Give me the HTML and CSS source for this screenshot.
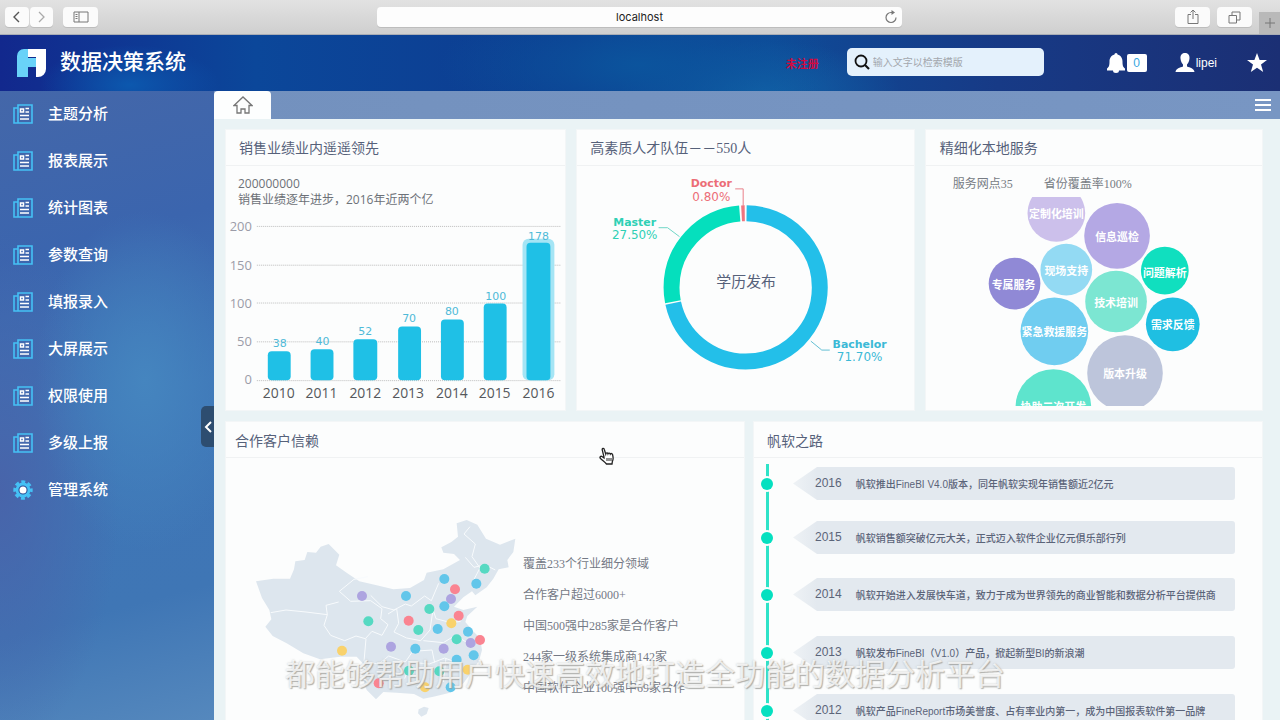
FILE: index.html
```html
<!DOCTYPE html>
<html lang="zh-CN">
<head>
<meta charset="utf-8">
<title>数据决策系统</title>
<link rel="stylesheet" href="styles.css">
</head>
<body>
<svg class="defs" aria-hidden="true">
  <symbol id="report" viewBox="0 0 20 20">
    <path d="M5 4H1v15h4M5 1h14v18H5z" fill="none" stroke="#45c1f5" stroke-width="1.600"/>
    <path d="M7.500 5h3v3h-3zM12.500 4.500H16M12.500 8H16M7 11.500h9M7 15h9" fill="none" stroke="#fff" stroke-width="1.500"/>
  </symbol>
</svg>
<div class="browser">
  <div class="pair">
    <button class="bbtn" aria-label="后退"><svg width="10" height="12" viewBox="0 0 10 12"><path d="M7 1L2 6l5 5" fill="none" stroke="#555" stroke-width="1.400"/></svg></button>
    <button class="bbtn" aria-label="前进"><svg width="10" height="12" viewBox="0 0 10 12"><path d="M3 1l5 5-5 5" fill="none" stroke="#aaa" stroke-width="1.300"/></svg></button>
  </div>
  <button class="bbtn wide" aria-label="边栏"><svg width="16" height="12" viewBox="0 0 16 12"><path d="M1 1h14v10H1zM6 1v10M2.500 3.500h2M2.500 5.500h2M2.500 7.500h2" fill="none" stroke="#777"/></svg></button>
  <div class="address">
    <input class="url" aria-label="地址" value="localhost">
    <button class="reload" aria-label="重新加载"><svg width="14" height="14" viewBox="0 0 14 14"><path d="M12 7.500A5 5 0 1 1 7 2.500h2" fill="none" stroke="#777" stroke-width="1.200"/><path d="M7.500 0l3.500 2.500-3.500 2.500z" fill="#777"/></svg></button>
  </div>
  <div class="bright">
    <button class="bbtn wide" aria-label="共享"><svg width="12" height="16" viewBox="0 0 12 16"><path d="M4 5.500H1v9h10v-9H8M6 10V1M3.500 3.500L6 1l2.500 2.500" fill="none" stroke="#777"/></svg></button>
    <button class="bbtn wide" aria-label="标签页"><svg width="13" height="13" viewBox="0 0 13 13"><path d="M1 4.500h7.500v7.500H1zM4 4V1h8v8H9" fill="none" stroke="#777"/></svg></button>
    <button class="newtab" aria-label="新标签页"><svg width="12" height="12" viewBox="0 0 12 12"><path d="M6 1v10M1 6h10" stroke="#777"/></svg></button>
  </div>
</div>
<header class="header">
  <svg class="logo" width="30" height="30" viewBox="0 0 30 30"><path d="M7 1h4v9h8v9h-8v10H0V8a7 7 0 0 1 7-7z" fill="#69d2f8"/><path d="M11 1h18v20a8 8 0 0 1-8 8h-2V9h-8z" fill="#fff"/></svg>
  <h1 class="brand">数据决策系统</h1>
  <div class="tools">
    <span class="unreg">未注册</span>
    <label class="search"><svg width="16" height="16" viewBox="0 0 16 16"><circle cx="7" cy="7" r="5.500" fill="none" stroke="#111" stroke-width="1.800"/><path d="M11 11l4 4" stroke="#111" stroke-width="2.200"/></svg><input class="query" aria-label="检索模版" placeholder="输入文字以检索模版"></label>
    <button class="tool bell" aria-label="消息"><svg width="20" height="22" viewBox="0 0 20 22"><path d="M10 1c1 0 1.500.8 1.500 1.600C15 3.500 16.500 6.500 16.500 9.500c0 4 .5 5.500 2.500 7v2H1v-2c2-1.500 2.500-3 2.500-7 0-3 1.500-6 5-6.900C8.500 1.800 9 1 10 1zM7 18.500h6a3 2.500 0 0 1-6 0z" fill="#fff"/></svg><span class="badge">0</span></button>
    <button class="tool user"><svg width="20" height="20" viewBox="0 0 20 20"><path d="M10 0c3.500 0 4.800 2.500 4.500 5.500-.2 3-1.500 5-2.500 6v2c3 1 7 2 7.500 5.500H.5C1 15.500 5 14.500 8 13.500v-2c-1-1-2.300-3-2.500-6C5.200 2.500 6.500 0 10 0z" fill="#fff"/></svg>lipei</button>
    <button class="tool" aria-label="收藏"><svg width="20" height="20" viewBox="0 0 20 20"><path d="M10 0l2.600 7H20l-6 4.500 2.200 7.500L10 14.700 3.800 19 6 11.500 0 7h7.400z" fill="#fff"/></svg></button>
  </div>
</header>
<div class="main">
  <aside class="sidebar">
    <nav class="nav">
      <a class="item" href="#"><svg class="ico"><use href="#report"/></svg>主题分析</a>
      <a class="item" href="#"><svg class="ico"><use href="#report"/></svg>报表展示</a>
      <a class="item" href="#"><svg class="ico"><use href="#report"/></svg>统计图表</a>
      <a class="item" href="#"><svg class="ico"><use href="#report"/></svg>参数查询</a>
      <a class="item" href="#"><svg class="ico"><use href="#report"/></svg>填报录入</a>
      <a class="item" href="#"><svg class="ico"><use href="#report"/></svg>大屏展示</a>
      <a class="item" href="#"><svg class="ico"><use href="#report"/></svg>权限使用</a>
      <a class="item" href="#"><svg class="ico"><use href="#report"/></svg>多级上报</a>
      <a class="item" href="#"><svg class="ico" viewBox="0 0 20 20"><circle cx="10" cy="10" r="8" fill="none" stroke="#45c1f5" stroke-width="3.400" stroke-dasharray="3.800 2.483" stroke-dashoffset="1.900"/><circle cx="10" cy="10" r="6" fill="#2b4f94" stroke="#45c1f5" stroke-width="2.800"/><circle cx="10" cy="10" r="3.500" fill="#fff"/></svg>管理系统</a>
    </nav>
    <button class="fold" aria-label="收起"><svg width="8" height="12" viewBox="0 0 8 12"><path d="M7 1L2 6l5 5" fill="none" stroke="#fff" stroke-width="2"/></svg></button>
  </aside>
  <div class="content">
    <div class="tabs">
      <button class="tab" aria-label="首页"><svg width="20" height="18" viewBox="0 0 20 18"><path d="M1 9.500L10 1l9 8.500h-3V17h-4v-4H8v4H4V9.500z" fill="none" stroke="#777" stroke-width="1.300"/></svg></button>
      <button class="menu" aria-label="菜单"><svg width="16" height="14" viewBox="0 0 16 14"><path d="M0 2h16M0 7h16M0 12h16" stroke="#fff" stroke-width="2"/></svg></button>
    </div>
    <main class="board">
      <div class="row top">
        <section class="card">
          <h2 class="title">销售业绩业内遥遥领先</h2>
          <p class="note">200000000<br>销售业绩逐年进步，2016年近两个亿</p>
          <svg class="chart" viewBox="225 208 341 198" role="img" aria-label="年度销售额">
            <path d="M256 226.500h306M256 265.500h306M256 303.500h306M256 342.500h306M256 381.500h306" stroke="#bbb" stroke-dasharray="1 1"/>
            <rect x="523" y="239" width="32" height="142" rx="6" fill="#a5e5f5"/>
            <g class="bars"><rect x="267" y="352" width="23" height="29" rx="4"/><rect x="310" y="350" width="23" height="31" rx="4"/><rect x="353" y="340" width="24" height="41" rx="4"/><rect x="398" y="327" width="23" height="54" rx="4"/><rect x="441" y="320" width="23" height="61" rx="4"/><rect x="484" y="304" width="23" height="77" rx="4"/><rect x="527" y="243" width="24" height="138" rx="4"/></g>
            <g class="axis"><text x="251" y="231">200</text><text x="251" y="270">150</text><text x="251" y="308">100</text><text x="251" y="347">50</text><text x="251" y="385">0</text></g>
            <g class="vals"><text x="279" y="348">38</text><text x="322" y="346">40</text><text x="365" y="336">52</text><text x="409" y="323">70</text><text x="452" y="316">80</text><text x="496" y="300">100</text><text x="539" y="240">178</text></g>
            <g class="years"><text x="278" y="399">2010</text><text x="321" y="399">2011</text><text x="365" y="399">2012</text><text x="408" y="399">2013</text><text x="452" y="399">2014</text><text x="495" y="399">2015</text><text x="539" y="399">2016</text></g>
          </svg>
        </section>
        <section class="card">
          <h2 class="title">高素质人才队伍－－550人</h2>
          <svg class="chart" viewBox="576 166 338 240" role="img" aria-label="学历分布">
            <g fill="none" stroke-width="16" transform="rotate(-90 745.500 288)">
              <circle cx="745.500" cy="288" r="74.500" pathLength="1000" stroke="#23bfe9" stroke-dasharray="714 286" stroke-dashoffset="-2"/>
              <circle cx="745.500" cy="288" r="74.500" pathLength="1000" stroke="#05dfbd" stroke-dasharray="268 732" stroke-dashoffset="-719"/>
              <circle cx="745.500" cy="288" r="74.500" pathLength="1000" stroke="#f0757f" stroke-dasharray="7 993" stroke-dashoffset="-991"/>
            </g>
            <path d="M735 189h8v17" fill="none" stroke="#e9808a"/><path d="M658 228h9l12 9" fill="none" stroke="#6fd6c6"/><path d="M811 342l11 9h8" fill="none" stroke="#63bfd4"/>
            <g class="pie"><g fill="#ec6d77"><text class="name" x="711" y="187">Doctor</text><text x="711" y="201">0.80%</text></g><g fill="#2fd0b5"><text class="name" x="634" y="226">Master</text><text x="634" y="239">27.50%</text></g><g fill="#3bb9d6"><text class="name" x="860" y="349">Bachelor</text><text x="860" y="362">71.70%</text></g></g>
            <text class="center" x="746" y="288">学历发布</text>
          </svg>
        </section>
        <section class="card">
          <h2 class="title wide">精细化本地服务</h2>
          <p class="facts"><span>服务网点35</span><span>省份覆盖率100%</span></p>
          <svg class="chart bubbles" viewBox="925 197 338 210" role="img" aria-label="服务内容">
            <circle cx="1056" cy="213" r="29" fill="#ccc0eb"/><circle cx="1117" cy="236" r="33" fill="#b4a8e4"/><circle cx="1066" cy="270" r="26" fill="#93daf3"/><circle cx="1165" cy="271" r="24" fill="#10dfbf"/><circle cx="1014" cy="284" r="26" fill="#9089d6"/><circle cx="1116" cy="302" r="31" fill="#7ce6d2"/><circle cx="1173" cy="325" r="27" fill="#1fbfe2"/><circle cx="1054" cy="332" r="34" fill="#70cdf0"/><circle cx="1125" cy="374" r="38" fill="#bdc5db"/><circle cx="1053" cy="408" r="38" fill="#5ee4cd"/>
            <text x="1056" y="218">定制化培训</text><text x="1117" y="241">信息巡检</text><text x="1066" y="275">现场支持</text><text x="1165" y="277">问题解析</text><text x="1013" y="289">专属服务</text><text x="1116" y="308">技术培训</text><text x="1173" y="330">需求反馈</text><text x="1054" y="337">紧急救援服务</text><text x="1125" y="379">版本升级</text><text x="1053" y="412">协助二次开发</text>
          </svg>
        </section>
      </div>
      <div class="row bottom">
        <section class="card">
          <h2 class="title alt">合作客户信赖</h2>
          <div class="clients">
            <svg class="map" viewBox="0 0 900 630" role="img" aria-label="客户分布地图">
              <path d="M78 214L130 206 180 206 192 178 196 154 224 150 232 126 258 128 272 110 296 102 328 134 318 166 352 190 388 214 440 226 490 238 540 234 582 210 590 188 640 178 690 150 672 132 640 128 634 112 664 96 684 80 680 40 710 30 742 44 768 86 810 104 856 86 850 126 832 150 836 172 806 178 790 206 770 232 736 256 726 244 700 262 672 290 700 300 742 290 712 318 706 336 728 362 750 384 756 420 748 450 728 482 700 520 660 548 610 560 580 566 552 552 500 548 460 546 438 568 410 540 400 510 408 470 380 440 330 440 270 448 220 430 170 400 128 378 106 350 124 328 118 300 96 264zM566 598l16-8 14 4-6 18-16 8-10-10z" fill="#dde6ee"/>
              <g fill="none" stroke="#f8fbfd" stroke-width="3" stroke-linejoin="round"><path d="M122 308l46-8 60 6 64 8-10 32 20 30 42 16 34-14 28 8 20-22 30 12 18-32-22-18 4-30-34-24-60 2-34-30 44-36 42-8"/><path d="M422 256l34 34 36 10 34-18 18 6 40-30 20 14 22-52"/><path d="M292 314l-4-28 38-10M474 312l26-16 6 44-14 26 38 18 42 8 28-32 8-54M408 386l-6 68 44 8 30-24 50 18 22-32 58-4 8 38M606 290l12 36 44 12 30-4M580 392l60 6 36-22 42 26M536 456l62 6 46-18 48 18M648 444l-8 72M540 462l-16 44M706 142l26 30 32-8 32 16M720 50l-18 22 34 30-10 38 24 34-18 34"/></g>
              <g fill="#ada4e0"><circle cx="396" cy="258" r="15"/><circle cx="663" cy="267" r="15"/><circle cx="483" cy="410" r="15"/><circle cx="641" cy="416" r="15"/><circle cx="722" cy="399" r="15"/></g>
              <g fill="#62c6ea"><circle cx="528" cy="258" r="15"/><circle cx="643" cy="207" r="15"/><circle cx="739" cy="221" r="15"/><circle cx="643" cy="289" r="15"/><circle cx="623" cy="357" r="15"/><circle cx="714" cy="365" r="15"/><circle cx="556" cy="416" r="15"/><circle cx="731" cy="436" r="15"/><circle cx="680" cy="449" r="15"/><circle cx="662" cy="532" r="15"/></g>
              <g fill="#56d9c2"><circle cx="764" cy="176" r="15"/><circle cx="598" cy="297" r="15"/><circle cx="415" cy="334" r="15"/><circle cx="565" cy="360" r="15"/><circle cx="680" cy="388" r="15"/><circle cx="537" cy="482" r="15"/><circle cx="628" cy="484" r="15"/></g>
              <g fill="#fa8491"><circle cx="675" cy="238" r="15"/><circle cx="536" cy="332" r="15"/><circle cx="686" cy="317" r="15"/><circle cx="750" cy="390" r="15"/><circle cx="446" cy="520" r="15"/></g>
              <g fill="#f9d26c"><circle cx="664" cy="340" r="15"/><circle cx="336" cy="422" r="15"/><circle cx="713" cy="479" r="15"/><circle cx="585" cy="532" r="15"/></g>
            </svg>
            <ul class="stats"><li>覆盖233个行业细分领域</li><li>合作客户超过6000+</li><li>中国500强中285家是合作客户</li><li>244家一级系统集成商142家</li><li>中国软件企业100强中69家合作</li></ul>
          </div>
        </section>
        <section class="card">
          <h2 class="title">帆软之路</h2>
          <ol class="timeline">
            <li class="event"><div class="tag"><span class="year">2016</span><span>帆软推出FineBI V4.0版本，同年帆软实现年销售额近2亿元</span></div></li>
            <li class="event"><div class="tag"><span class="year">2015</span><span>帆软销售额突破亿元大关，正式迈入软件企业亿元俱乐部行列</span></div></li>
            <li class="event"><div class="tag"><span class="year">2014</span><span>帆软开始进入发展快车道，致力于成为世界领先的商业智能和数据分析平台提供商</span></div></li>
            <li class="event"><div class="tag"><span class="year">2013</span><span>帆软发布FineBI（V1.0）产品，掀起新型BI的新浪潮</span></div></li>
            <li class="event"><div class="tag"><span class="year">2012</span><span>帆软产品FineReport市场美誉度、占有率业内第一，成为中国报表软件第一品牌</span></div></li>
          </ol>
        </section>
      </div>
    </main>
  </div>
</div>
<svg class="cursor" width="16" height="18" viewBox="0 0 16 18"><path d="M5 10L3.300 3.200c-.5-2 1.500-2.500 2-.7L6.700 7c.3-1.400 2-1.400 2.300-.2.500-1.200 2-.9 2.300.3.700-1 2-.6 2.300.7.900 3.200.9 4.700-.3 7L13 17H7.500C6 15 3.500 13.500 1.500 11.500c-1.300-1.500.3-2.700 1.500-2L5 11z" fill="#fff" stroke="#222" stroke-width="1.300"/><path d="M8 11v3M10 11v3M12 11v3" stroke="#222"/></svg>
<p class="caption">都能够帮助用户快速高效地打造全功能的数据分析平台</p>
</body>
</html>
```
FILE: styles.css
```css
* { box-sizing: border-box; }
body {
  margin: 0;
  height: 100vh;
  overflow: hidden;
  position: relative;
  display: flex;
  flex-direction: column;
  font-family: "Liberation Sans", "Noto Sans CJK SC", sans-serif;
  font-size: 12px;
}
button { border: 0; padding: 0; background: none; font: inherit; color: inherit; display: flex; align-items: center; justify-content: center; }
input { border: 0; padding: 0; background: none; outline: 0; font: inherit; min-width: 0; }
h1, h2, p, ul, ol { margin: 0; padding: 0; font-weight: 400; list-style: none; }
.defs { display: none; }

.browser {
  flex: none;
  height: 35px;
  display: grid;
  grid-template-columns: 48px 35px 1fr 525px 1fr 105px;
  align-items: center;
  column-gap: 10px;
  padding-left: 5px;
  background: linear-gradient(#e2e2e2, #cfcfcf);
  border-bottom: 1px solid #a9adb5;
}
.pair { display: flex; gap: 1px; }
.bbtn { width: 24px; height: 20px; background: #fbfbfb; border-radius: 4px; box-shadow: 0 1px 0 #bdbdbd; }
.bbtn.wide { width: 35px; }
.address { grid-column: 4; display: flex; height: 20px; margin: 0 -3px 0 3px; background: #fdfdfd; border-radius: 4px; box-shadow: 0 1px 0 #bdbdbd; padding: 0 4px 0 18px; }
.url { flex: 1; text-align: center; color: #222; font-family: Inter, sans-serif; font-size: 11px; }
.bright { grid-column: 6; display: flex; align-items: center; gap: 7px; height: 34px; }
.newtab { width: 21px; height: 22px; flex: none; background: #b9b9b9; align-self: flex-end; }

.header {
  flex: none;
  height: 56px;
  display: flex;
  align-items: center;
  padding: 0 13px 0 17px;
  color: #fff;
  background:
    radial-gradient(ellipse 90px 40px at 130px 50px, #0c58ae, transparent),
    radial-gradient(ellipse 200px 70px at 640px 30px, #0b549d, transparent),
    radial-gradient(ellipse 140px 50px at 760px 56px, #1261a6, transparent),
    linear-gradient(90deg, #12288d, #0b479a 20%, #0d3c90 45%, #0e4b98 60%, #173a86 78%, #1b2f74);
}
.brand { margin: 0 0 3px 13px; font-size: 21px; line-height: 30px; font-weight: 500; }
.tools { margin-left: auto; display: flex; align-items: center; }
.unreg { color: #d3093f; font-size: 11px; font-weight: 700; margin-right: 28px; }
.search { width: 197px; height: 28px; display: flex; align-items: center; gap: 3px; padding: 0 7px; background: #e4f1fc; border-radius: 5px; margin: 0 62px 2px 0; }
.query { flex: 1; font-size: 10px; color: #333; }
.query::placeholder { color: #a3a7ad; opacity: 1; }
.bell { gap: 1px; margin-right: 28px; }
.badge { width: 20px; height: 18px; line-height: 18px; border-radius: 2px; background: #fff; color: #35a6df; font-size: 12px; }
.user { gap: 1px; margin-right: 30px; font-family: "Liberation Sans", sans-serif; font-size: 12px; }

.main { flex: 1; display: flex; min-height: 0; }
.sidebar {
  position: relative;
  width: 214px;
  flex: none;
  background:
    radial-gradient(ellipse 110px 170px at 145px 290px, #4585bf, transparent),
    radial-gradient(ellipse 120px 260px at 0 400px, #4864aa, transparent),
    linear-gradient(165deg, #4467a9, #3b65ae 25%, #3e75b7 50%, #3f76b5 80%, #5588bd);
}
.item { display: flex; align-items: center; gap: 15px; height: 47px; padding: 0 0 1px 13px; color: #fff; font-size: 15px; line-height: 24px; font-weight: 500; text-decoration: none; }
.ico { width: 20px; height: 20px; }
.fold { position: absolute; right: 0; top: 315px; width: 13px; height: 41px; background: #2d4d70; border-radius: 5px 0 0 5px; }

.content { flex: 1; min-width: 0; display: flex; flex-direction: column; background: #eaf3f5; }
.tabs { flex: none; height: 28px; display: flex; justify-content: space-between; padding-right: 9px; background: linear-gradient(90deg, #7391be, #7896c3); }
.tab { width: 57px; background: #fdfefe; border-radius: 4px 4px 0 0; }
.board { flex: 1; min-height: 0; overflow: hidden; display: flex; flex-direction: column; gap: 10px; padding: 10px 17px 0 11px; }
.row { flex: none; display: grid; }
.top { grid-template-columns: 341fr 338fr 338fr; gap: 10px; }
.bottom { grid-template-columns: 520fr 510fr; gap: 8px; }
.card { background: #fcfdfd; border: 1px solid #f3f6f7; min-width: 0; padding-bottom: 4px; }
.title { height: 36px; line-height: 37px; padding: 0 13px; border-bottom: 1px solid #f0f2f3; color: #56617a; font-family: "Liberation Serif", "Noto Sans CJK SC", serif; font-size: 14px; }
.title.wide { padding: 0 14px; }
.bottom .title { line-height: 40px; }
.title.alt { padding: 0 9px; }
.note { padding: 10px 12px 0; color: #6d7178; font-family: "Open Sans", "Noto Sans CJK SC", sans-serif; font-size: 12px; line-height: 16px; }
.chart { display: block; width: 100%; }
.chart text { text-anchor: middle; }
.bars { fill: #1fc0e6; }
.chart .axis text { text-anchor: end; fill: #9b9ca8; font-family: "Open Sans", sans-serif; font-size: 13px; }
.vals { fill: #4fbad8; font-family: "DejaVu Sans", sans-serif; font-size: 11px; }
.years { fill: #55585c; font-family: "Open Sans", sans-serif; font-size: 14px; }
.pie { font-family: "DejaVu Sans", sans-serif; font-size: 12px; }
.name { font-size: 11px; font-weight: 700; }
.center { fill: #56617a; font-family: "Noto Sans CJK SC", sans-serif; font-size: 15px; }
.facts { display: flex; gap: 31px; height: 31px; line-height: 36px; padding-left: 27px; color: #777c84; font-family: "Liberation Serif", "Noto Sans CJK SC", serif; font-size: 12px; }
.bubbles text { fill: #fff; font-family: "Noto Sans CJK SC", sans-serif; font-size: 11px; font-weight: 700; }

.clients { display: flex; gap: 8px; padding: 52px 5px 0 4px; }
.map { width: 290px; flex: 1 1 0; max-width: 300px; min-width: 0; align-self: flex-start; }
.stats { flex: none; margin-left: -15px; padding-top: 39px; color: #747985; font-family: "Liberation Serif", "Noto Sans CJK SC", serif; font-size: 12px; line-height: 31px; white-space: nowrap; }
.timeline { display: grid; grid-template-rows: 54px 57px 58px 58px 58px; margin: 6px 0 0 12px; padding: 3px 27px 0 24px; border-left: 3px solid #2fe3c8; }
.event { position: relative; }
.event::before { content: ""; position: absolute; left: -32px; top: 11px; width: 12px; height: 12px; border-radius: 50%; background: #05e0c0; box-shadow: 0 0 0 2px #fcfdfd; }
.tag { height: 33px; display: flex; align-items: center; gap: 14px; padding-left: 22px; background: linear-gradient(90deg, #eef2f5, #e3e9ef 24px); border-radius: 3px; clip-path: polygon(0 50%, 24px 0, 100% 0, 100% 100%, 24px 100%); color: #5b6479; font-size: 10px; font-weight: 500; white-space: nowrap; }
.year { font-size: 12px; font-weight: 400; }

.cursor { position: absolute; left: 599px; top: 447px; }
.caption { position: absolute; left: 10px; right: 0; bottom: 23px; text-align: center; color: rgba(255, 255, 255, .75); font-size: 30px; line-height: 44px; font-weight: 400; text-shadow: 1px 1px 1px rgba(150, 150, 145, .7), 0 0 2px rgba(170, 170, 165, .6); }
```
